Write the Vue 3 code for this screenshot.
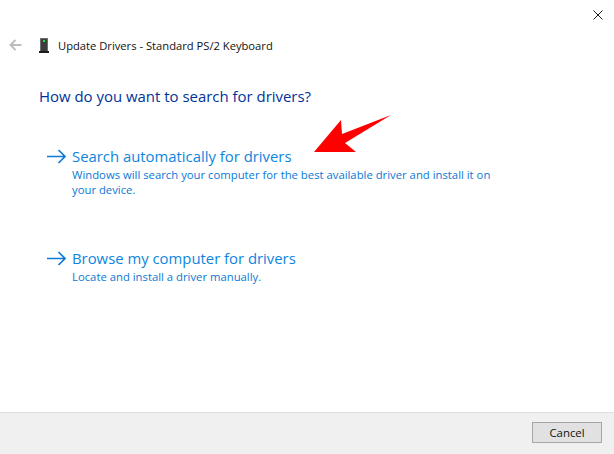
<template>
  <div class="win">
    <svg class="close" width="10" height="10" viewBox="0 0 10 10"><path d="M0.5 0.5 9.5 9.5M9.5 0.5 0.5 9.5" stroke="#1a1a1a" stroke-width="1" fill="none"/></svg>
    <div class="main">
      <header class="head">
        <svg class="back" width="14" height="12" viewBox="0 0 14 12"><path d="M12.5 6H1.5M6.5 1 1.5 6l5 5" stroke="#bdbdbd" stroke-width="1.9" fill="none"/></svg>
        <svg class="dev" width="10" height="15" viewBox="0 0 10 15">
          <rect x="1" y="0" width="8" height="13" fill="#6f6f6f"/>
          <rect x="2" y="1" width="6" height="12" fill="#3c3c3c"/>
          <rect x="4" y="2" width="2" height="2" fill="#22e03a"/>
          <rect x="0" y="13" width="10" height="2" fill="#1c1c1c"/>
        </svg>
        <span class="title">Update Drivers - Standard PS/2 Keyboard</span>
      </header>
      <h1 class="question">How do you want to search for drivers?</h1>
      <section v-for="o in options" :key="o.title" class="opt" :class="o.cls">
        <svg class="go" width="20" height="15" viewBox="0 0 20 15"><path d="M1 7.5H18.5M12.5 1l6.5 6.5-6.5 6.5" stroke="#0f7bd8" stroke-width="1.7" fill="none"/></svg>
        <div class="copy">
          <div class="opt-title">{{ o.title }}</div>
          <p class="opt-desc">{{ o.desc }}</p>
        </div>
      </section>
    </div>
    <footer class="foot"><button class="cancel">Cancel</button></footer>
    <svg class="red" width="80" height="40" viewBox="0 0 80 40"><path d="M77 1 28 20 27 6 0 38 42 38 31 29Z" fill="#fe0000"/></svg>
  </div>
</template>

<script setup>
const options = [
  { title: 'Search automatically for drivers', desc: 'Windows will search your computer for the best available driver and install it on your device.', cls: 'first' },
  { title: 'Browse my computer for drivers', desc: 'Locate and install a driver manually.', cls: 'second' }
]
</script>

<style>
html, body { margin: 0; background: #fff; }
</style>

<style scoped>
.win {
  position: relative;
  width: 614px;
  height: 454px;
  background: #fff;
  display: flex;
  flex-direction: column;
  font-family: "Open Sans", "Noto Sans", sans-serif;
  overflow: hidden;
}
.main { flex: 1; padding: 36px 0 0 9px; }
.close { position: absolute; left: 593px; top: 10px; }
.red { position: absolute; left: 314px; top: 114px; }
.head { display: flex; align-items: center; height: 18px; }
.dev { margin-left: 16px; }
.title { margin-left: 9px; font-size: 11.2px; color: #111; white-space: nowrap; }
.question { margin: 31px 0 0 30px; font-size: 14.95px; font-weight: 400; line-height: 22px; color: #003399; }
.opt { display: flex; align-items: flex-start; margin-left: 37px; color: #0a7fd9; }
.first { margin-top: 38px; }
.second { margin-top: 50px; }
.go { margin-top: 4px; }
.copy { margin-left: 6px; width: 428px; }
.opt-title { font-size: 14.87px; line-height: 22px; color: #0d85de; white-space: nowrap; }
.opt-desc { margin: 0; font-size: 11.3px; line-height: 15px; color: #0a78d6; }
.foot {
  box-sizing: border-box;
  height: 42px;
  background: #f0f0f0;
  border-top: 1px solid #dfdfdf;
  display: flex;
  justify-content: flex-end;
  padding: 9px 12px 0 0;
}
.cancel {
  box-sizing: border-box;
  width: 70px;
  height: 21px;
  padding: 0;
  background: #e1e1e1;
  border: 1px solid #a6a6a6;
  font: 11.4px "Open Sans", "Noto Sans", sans-serif;
  color: #111;
}
</style>
